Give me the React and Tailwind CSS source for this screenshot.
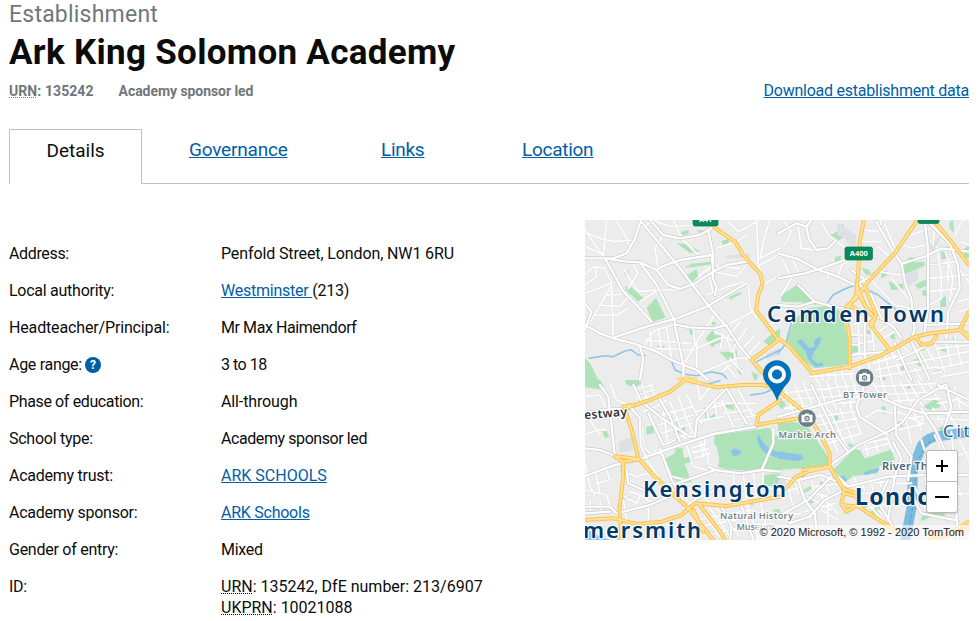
import React from "react";

const link = "text-[#005ea5] underline decoration-1 underline-offset-[1px] [text-decoration-skip-ink:none]";

const tiles = {
  nw: "translate(580 215) scale(0.33333)",
  ne: "translate(778 215) scale(0.33333)",
  sw: "translate(580 380) scale(0.33333)",
  se: "translate(778 380) scale(0.33333)",
};

/* Each map layer is split in four quadrants, drawn at three units to a pixel. */
const parks = {
  nw: "M200 278L228 248L257 308L218 320Z M290 85L320 88L360 108L330 114Z M303 50L325 45L326 56L306 60Z M424 78L445 72L448 88L430 94Z M310 158L335 146L392 140L394 148L345 155Z M322 180L350 162L354 182L336 202L322 194Z M446 246L482 230L482 238L450 254Z M135 215L150 212L170 232L190 248L180 264L162 248L140 228Z M133 170L145 167L145 180L134 180Z M15 430L32 448L55 495L15 495Z M327 342L345 345L347 366L330 357Z M395 320L410 322L400 335Z M376 372L398 345L405 360L424 362L428 380L405 388L398 398Z M418 410L455 410L470 405L474 440L462 430L448 440Z M550 380L565 365L600 340V380L570 392Z M230 392L254 392L252 402L232 400Z M350 45L380 47L384 57L362 56Z M515 470L535 480L530 495L522 495Z M470 460L484 458L490 480L478 476Z",
  ne: "M10 240L60 208L80 238L118 258L115 270L70 262L10 260Z M28 370L50 312L90 280L150 272L190 290L212 385L212 450L110 460L60 430L35 395Z M158 60L185 45L190 28L198 30L194 68L184 76Z M172 125L190 122L185 142L170 140Z M250 158L275 165L278 180L262 178Z M515 20L525 15L528 55L515 40Z M488 110L508 110L512 128L492 134Z M310 175L325 165L328 182L310 190Z M380 150L395 126L415 130L410 142L440 140V152L380 178L370 170Z M332 198L352 208L376 206V222L340 225Z M410 210L445 192L446 212L422 222Z M434 225L446 225L446 244L432 240Z M488 250L504 242L504 275L486 278Z M560 100L573 90V130L558 130Z M268 342L278 348L276 360L267 355Z M315 335L322 335L323 346L314 346Z M335 355L350 355L352 375L337 370Z M220 360L240 360V366H220Z M220 390L242 396L240 410L220 415Z M405 435L435 425L450 435L425 455Z M420 400L432 396L440 405L425 410Z M523 365L535 365L537 378L527 378Z M490 395L505 395L506 410L490 408Z M370 445L382 452L376 468L368 465Z M465 470L485 463L486 470L468 477Z M300 490L320 482L324 495H305Z",
  sw: "M15 0H60L72 20L58 28L15 22Z M135 0L180 0L186 12L162 22L140 14Z M404 165L500 153L570 143L575 160L600 170V270L550 275L440 268L414 260L418 238L410 200L402 188Z M255 236L285 220L287 205L308 205L312 235L330 228L334 245L314 252L335 305L315 310L275 298L262 262Z M198 142L220 136L222 160L200 164Z M65 150L78 147L88 170L75 175Z M262 125L276 128L276 134L262 132Z M280 155L312 138L316 148L290 164Z M286 128L300 125L296 140Z M374 100L385 92L390 110L410 98L414 110L378 120Z M434 75L460 68L462 90L440 84Z M468 93L483 90L483 100L470 100Z M502 370L518 358L520 378Z M552 285L600 280V325L570 318L550 318Z M122 347L136 343L135 352L152 350L150 357L122 355Z M330 0H350L355 8L338 15Z M108 460L122 456L124 480H110Z M580 388L600 388V400L582 400Z",
  se: "M0 130L50 125L90 140L155 238L155 255L80 265L0 270Z M165 270L228 208L246 210L260 236L340 208L350 238L298 262L300 280L225 288L195 312L165 285Z M435 80L480 50L488 80L455 90Z M500 28L515 22L520 40L505 43Z M0 75L15 60L24 76L12 88Z M310 82L320 78L328 100L318 102Z M164 110L180 105L180 128L164 125Z M360 125L374 122L374 140L362 140Z M70 285L80 280L84 300L72 300Z M125 305L142 302L140 318L128 318Z M93 345L105 345L107 370L93 370Z M280 390L305 380L304 405L280 400Z M245 378L268 374L270 385L250 390Z M430 410L470 395L500 400V415L460 410L430 424Z M480 145L500 135L502 155L490 160Z M210 190L228 195L225 203L212 200Z M385 15L410 10L408 25L388 26Z M75 330L98 318L101 328L80 338Z",
};

const estates = {
  nw: "M438 122L508 115V128L438 130Z M560 415L600 400V422L560 430Z",
  ne: "M178 22L235 60L235 90L222 100L200 70L178 60Z M455 90L490 60L475 100L460 110Z M382 180L420 160L420 195L390 215L382 205Z",
  sw: "M115 185L158 170V210L118 218Z",
  se: "M0 300L20 290L25 320L0 330Z",
};

const rivers = {
  nw: "M28 430L75 422L100 425L135 408L152 404L175 420L195 422 M272 432L285 465L315 478L350 482L395 470L428 478L440 490 M530 440L560 425L600 405",
  ne: "M150 262L165 240L200 222L232 210 M270 225L300 240L350 280L356 288 M0 415L25 385L30 360L40 325",
  sw: "M385 12L420 2 M512 45L550 40L572 30",
};

const lakes = {
  ne: "M56 378L70 372L95 400L110 395L108 378L122 366H130L126 384L110 408L100 430L118 446L135 442V454L112 456L90 432L82 408Z",
  sw: "M453 212Q468 200 484 214Q478 228 465 230Q454 224 453 212Z M534 160Q545 190 575 210L600 218V234Q560 228 544 208Q528 184 534 160Z M15 445L60 470L90 480H15Z",
  se: "M0 214L40 220L70 224L78 235L60 243L0 236Z M172 290L198 288L207 300L194 314Z M256 278L305 262L300 275L262 286Z",
};

const roads = {
  nw: "M180 15L225 70L300 160L345 220L400 290L440 335L480 395L515 435L545 475 M183 15L165 70L140 115L100 130L15 130 M75 130L140 140L180 142L230 165L265 210L300 222L345 205L400 170L440 150L500 140 M75 130L95 165L130 230L160 260L215 320 M15 330L60 355L100 370L160 385L190 395L230 410L265 430L310 450L350 465L385 495 M100 368L200 335L290 310L380 275L430 245L500 205 M15 268L35 290L15 345 M283 325L310 450L310 495 M285 328L330 337L400 340L440 330 M182 145L230 210L285 320 M230 165L245 155L300 135L395 120L400 170 M180 395L190 430L180 495 M405 15L385 50L400 120L398 190L410 215L405 240 M210 15L250 60L300 70L360 60L395 40",
  ne: "M0 55L55 25L85 35L100 15 M85 35L92 70L115 105L150 100L175 75 M0 115L60 132L115 162L180 185L230 210L260 195L300 170 M0 190L80 175L130 160L215 130 M0 270L60 275L110 260L165 275L195 280 M110 260L60 210 M235 200L280 240L310 310L350 340L370 370 M295 20L340 100L370 145L382 205L400 250L410 340L400 380L430 440L455 495 M440 20L450 100L450 280L440 350 M450 20L515 85L540 150L545 220L510 290L505 370 M220 165L255 190L280 255L300 310 M440 330L573 325 M375 145L440 125L490 100L573 110 M355 435L390 420L430 400L470 380L573 380 M350 385L375 440L400 495 M260 320L260 430 M220 420L330 410",
  sw: "M60 15L85 50L105 230 M15 100L70 90L140 85L210 60L240 45 M15 205L60 210L105 228 M15 288L105 255L185 235L300 195L400 162L530 140 M150 80L180 115L182 195L200 235 M240 205L275 300L310 360 M205 100L250 195L285 180 M235 50L270 110L300 185 M345 170L350 120L400 65L440 25 M440 25L500 130 M385 260L405 270L480 280L545 270L600 275 M290 310L350 290L405 270 M310 385L350 355L420 325 M140 270L145 310L190 330 M15 380L90 380L110 400L210 375L290 340 M15 400L90 395 M545 270L580 190L580 145 M210 425L240 480 M425 380L455 440L450 480 M480 365L520 480 M160 15L185 65L240 110L330 170L345 170",
  se: "M155 258L240 195L340 150L375 125L420 60L500 15 M165 275L210 320L330 290L450 285L573 285 M0 290L60 300L130 285L200 315 M60 300L80 360L110 400L120 480 M100 15L140 95L170 160L210 215 M0 110L180 60L280 40L370 80L440 100L573 95 M350 80L355 165L400 230L390 300 M345 185L370 235L350 290L330 420 M430 85L470 145L500 210 M265 0L235 80L245 110L330 165 M505 15L520 80L500 140 M200 330L140 360L95 410L35 430 M160 290L90 360L0 410 M330 300L300 365L350 450 M395 330L430 400L530 420 M535 400L540 480 M480 15L573 60",
};

const lanes = {
  nw: "M20 55L60 70L100 80L165 75 M20 95L70 120L80 15 M15 45L50 95L75 130 M110 20L135 60L150 95 M15 180L40 155L75 160L95 205L15 235 M45 155L50 185L15 210 M95 210L55 280L25 330 M60 270L120 275L145 245 M80 240L125 238 M45 300L110 300L145 280 M95 215L100 365 M130 160L175 230L235 225 M160 150L175 175L145 220 M180 260L235 225L300 225 M175 40L230 15 M230 20L275 35L345 30 M235 165L225 100L250 60 M280 15L305 70L355 120 M345 220L360 180L400 150 M385 170L400 235L440 260 M380 240L440 215L505 200 M400 170L470 185L495 155 M410 155L480 160 M410 100L470 80L500 60 M445 20L475 50L530 20 M530 15L535 150L550 190 M570 15L555 60L540 130L600 100 M540 150L580 130L600 110 M550 210L600 180 M505 205L510 280L530 310 M440 330L500 300L525 285 M410 290L350 380L350 460 M340 340L345 390L310 450 M190 395L225 345L280 330 M210 350L215 410 M235 345L245 415 M260 340L275 430 M195 375L330 385 M215 400L345 405 M350 400L430 365L480 385 M370 470L470 430L515 430 M430 440L470 490 M450 430L490 475 M425 470L450 450 M405 350L430 360L420 400 M440 370L455 410 M460 400L470 450 M480 320L440 370 M500 340L460 400 M520 365L480 410 M540 380L500 425 M560 330L590 320",
  ne: "M20 20L40 50L20 90 M60 30L70 100L115 105 M130 20L155 65L205 100 M180 190L190 150L225 130 M150 190L145 160 M15 135L40 190L10 240 M45 135L65 180 M245 80L310 80 M250 45L300 50L310 15 M320 25L350 100 M300 170L370 180 M280 195L350 270L400 280 M340 190L390 250 M300 95L330 120 M400 60L455 40 M360 85L400 100L440 90 M470 20L465 90 M530 60L555 15 M475 95L490 180L490 250L440 280 M500 100L525 190L515 260 M450 150L540 140 M450 190L573 180 M450 230L540 220 M510 150L510 200 M540 160L573 200 M550 80L573 90 M540 260L573 250 M545 290L573 280 M220 330L260 320 M215 360L270 360 M220 390L280 380 M240 320L245 430 M280 320L290 430 M300 350L350 320 M315 370L350 350 M295 340L360 440 M300 430L310 495 M320 420L340 490 M340 410L370 480 M360 400L390 470 M285 445L400 410 M290 465L470 430 M300 485L480 455 M375 395L400 420 M420 400L450 455 M440 390L470 440 M470 380L500 470 M500 360L520 450 M530 360L550 450 M480 400L573 390 M470 430L573 410 M480 460L573 440 M490 485L573 470 M410 460L430 495 M440 480L490 470 M110 475L115 495 M130 470L135 495 M150 466L155 495 M170 462L175 495 M190 460L195 495 M215 450L220 495 M240 445L245 480 M95 485L230 475 M270 440L275 465",
  sw: "M90 10L110 60L145 75 M160 30L220 15 M165 45L225 30 M175 58L230 45 M160 15L175 60 M185 12L200 55 M210 10L225 48 M15 50L60 45L75 80 M190 95L225 80L260 60 M225 110L340 80 M235 135L340 105 M245 160L335 130 M255 185L345 155 M250 95L265 200 M270 65L315 175 M295 50L340 165 M320 45L365 130 M345 95L430 75 M350 125L430 110 M380 75L385 120 M405 65L410 110 M425 60L460 140 M450 45L500 130 M475 30L520 110 M405 70L530 70 M430 100L520 90 M460 120L530 105 M350 5L360 60 M390 20L360 60 M430 20L400 80 M15 165L50 150L80 150 M30 120L60 165 M185 130L190 200L215 225 M320 195L340 260L380 270 M335 205L380 190 M338 218L385 205 M345 235L390 220 M360 180L370 230 M375 175L372 205L385 225L385 250L405 268 M15 250L30 320L45 345 M45 270L60 340 M75 255L90 300L50 310 M15 330L80 345L90 380 M125 270L170 290L200 280 M130 300L160 305 M180 240L240 205 M200 240L235 290 M245 220L275 290L320 300 M270 310L350 330 M30 365L30 405 M60 365L65 405 M125 345L170 370L180 345L210 365 M150 335L185 345 M205 380L205 425 M310 350L340 380 M300 365L340 395 M370 350L400 380 M370 400L420 470 M390 385L450 470 M410 385L480 470 M350 420L450 400L520 390 M360 440L520 410 M380 465L540 430 M500 370L530 460 M540 360L560 450 M460 280L465 370 M490 280L500 370 M520 275L530 360 M550 280L545 360 M545 320L600 330 M130 360L140 425",
  se: "M20 20L50 110 M50 10L85 100 M75 5L110 95 M120 0L150 95 M145 0L175 90 M170 0L200 80 M200 0L220 80 M225 0L240 60 M0 40L250 15 M0 60L230 45 M20 85L240 65 M110 110L230 95 M120 135L235 115 M135 165L240 135 M150 190L250 160 M125 100L180 215 M155 90L205 200 M185 85L225 185 M215 75L250 160 M250 120L300 90L345 100 M260 190L330 175 M255 210L335 190 M260 190L270 225 M290 180L300 215 M325 170L345 215 M280 0L310 50 M310 0L330 65 M340 0L370 75 M365 0L400 75 M390 0L440 90 M420 0L450 50 M450 0L480 60 M290 20L480 10 M300 45L480 35 M320 65L490 55 M360 95L430 130 M360 120L430 110 M360 150L440 130 M380 100L400 190 M405 90L430 150 M440 95L430 130 M465 85L500 140 M490 65L540 145 M530 20L550 100 M480 70L573 50 M450 115L573 120 M540 60L573 80 M10 340L70 320 M30 320L45 380 M50 300L60 340 M100 300L110 340L150 350 M130 290L155 340 M110 320L190 310 M90 350L160 390 M130 350L180 400 M80 395L170 370 M130 390L180 420 M150 370L150 430 M230 295L245 330 M250 300L260 330 M275 295L285 330 M300 290L310 320 M220 310L340 305 M230 345L330 330 M250 390L330 370 M350 310L400 310 M360 350L395 340 M300 390L340 430 M270 370L330 440 M410 320L450 400 M440 290L460 400 M470 290L480 395 M500 290L540 395 M530 285L550 350 M440 385L550 380 M430 345L573 340 M430 180L440 210 M470 165L490 210 M520 155L525 210 M545 180L573 240 M530 230L573 215 M0 410L70 400",
};

const arteries = {
  nw: "M395 30L420 50L465 80L490 120L520 155L540 175L548 205L535 240L528 285L595 375L515 435L560 485",
  ne: "M258 15L245 80L242 150L235 240L210 280L205 310L215 370L215 460 M415 20L350 115L270 200L235 250L205 275 M470 20L520 80L573 150 M235 210L260 270L290 310L275 325L335 405 M260 215L295 300L280 335 M240 235L280 300 M210 270L250 290 M0 370L35 395L100 470 M100 475L215 455L300 425L350 400L410 365L460 355L545 345L573 360 M545 345L573 290 M545 345L573 370 M415 370L430 390L460 385L475 365",
  sw: "M600 25L545 15L485 15L410 22L340 5L315 0L270 35L215 58L150 80L135 90L155 150L175 235L220 285L275 340L325 385L360 430L400 480 M130 80L150 75 M105 230L128 245L130 290L118 390L125 480 M105 228L178 238L128 245 M15 420L100 415L170 432L245 425L305 405L345 370L440 378L600 350 M600 60L535 105L530 135L600 122 M355 370L420 455L435 480 M340 390L370 455",
  se: "M0 30L35 60L90 105L130 170L155 220L155 260L90 275L55 290L20 330 M0 125L90 110 M150 260L75 270 M155 260L195 325L235 340L240 375L205 395L190 370L200 325 M235 375L280 405L350 450 M195 340L245 350 M190 375L245 380 M505 465L573 425 M455 480L573 445",
};

function Layer({ data, ...props }) {
  return (
    <g {...props}>
      {Object.entries(data).map(([k, d]) => (
        <path key={k} d={d} transform={tiles[k]} />
      ))}
    </g>
  );
}

function Camera({ x, y }) {
  return (
    <g transform={`translate(${x} ${y})`}>
      <circle r="9.3" fill="#6b7f88" stroke="#fff" strokeWidth="0.8" />
      <path d="M-5.500-3.500H-2.600L-1.600-4.800H1.600L2.600-3.500H5.500V4H-5.500Z" fill="#fff" />
      <circle cy="0.3" r="2.7" fill="#6b7f88" />
      <circle cy="0.3" r="1.5" fill="#fff" />
      <circle cy="0.3" r="0.7" fill="#6b7f88" />
    </g>
  );
}

function Shield({ x, y, width, label, labelWidth }) {
  return (
    <g>
      <rect x={x} y={y} width={width} height="13" rx="2" fill="#078b59" stroke="#057a4d" strokeWidth="0.7" />
      {label && (
        <text x={x + width / 2} y={y + 9.3} textAnchor="middle" fill="#fff" fontSize="7.5" fontWeight="700" textLength={labelWidth} lengthAdjust="spacingAndGlyphs">
          {label}
        </text>
      )}
    </g>
  );
}

function MapView() {
  return (
    <div className="relative h-[320px] w-[384px] shrink-0 overflow-hidden bg-[#ececec]">
      <svg viewBox="585 220 384 320" className="block h-[320px] w-[384px] font-['Noto_Sans',sans-serif]">
        <g strokeLinejoin="round" strokeLinecap="round">
          <Layer data={parks} fill="#aee3b8" />
          <Layer data={estates} fill="#dde0e5" />
          <Layer data={lakes} fill="#8cc4e8" />
          <Layer data={rivers} fill="none" stroke="#8cc4e8" strokeWidth="4.5" />
          <path d="M905 542L912 505L913 468L922 445Q930 436 940 436L969 432" fill="none" stroke="#7dbce0" strokeWidth="10" />
          <path d="M908 535L914 498L916 465L926 444L936 439" fill="none" stroke="#5f9fc8" strokeWidth="1" strokeDasharray="3 3" />
          <Layer data={lanes} fill="none" stroke="#dedede" strokeWidth="7.5" />
          <Layer data={lanes} fill="none" stroke="#fff" strokeWidth="5" />
          <Layer data={roads} fill="none" stroke="#c6c6c6" strokeWidth="10.5" />
          <Layer data={roads} fill="none" stroke="#fff" strokeWidth="7.2" />
          <Layer data={arteries} fill="none" stroke="#fbc440" strokeWidth="12" />
          <Layer data={arteries} fill="none" stroke="#ffe0a0" strokeWidth="6" />
          <ellipse cx="687" cy="379" rx="11" ry="2.5" fill="#ffd98a" />
        </g>

        <Shield x={693} y={213} width={25} label="A41" labelWidth={13} />
        <Shield x={845} y={247} width={27.5} label="A400" labelWidth={18} />
        <Shield x={918} y={210.500} width={21} />

        <g fill="#00396a" stroke="#fff" strokeWidth="2.5" strokeOpacity="0.85" strokeLinejoin="round" paintOrder="stroke">
          <text x="767" y="322" fontSize="22" fontWeight="600" textLength="177">Camden Town</text>
          <text x="643" y="497" fontSize="22" fontWeight="600" textLength="143">Kensington</text>
          <text x="583" y="538" fontSize="22" fontWeight="600" textLength="118">mersmith</text>
          <text x="855" y="505" fontSize="23" fontWeight="700" textLength="93">London</text>
          <text x="943" y="437" fontSize="17" textLength="38" fill="#2d5f86">City</text>
          <text x="882" y="470" fontSize="11" fontWeight="600" textLength="76" fill="#3d6783">River Thames</text>
          <text x="584" y="417.500" fontSize="12" fontWeight="600" textLength="43" fill="#303438" transform="rotate(-5 605 414)">estway</text>
          <g fill="#75868d" fontSize="9.3" fontWeight="600">
            <text x="843" y="397.500" textLength="44">BT Tower</text>
            <text x="778.500" y="438" textLength="57.500">Marble Arch</text>
            <text x="720" y="519" textLength="73">Natural History</text>
            <text x="736.500" y="529.500" textLength="38">Museum</text>
          </g>
        </g>
        <Camera x={864.6} y={377.5} />
        <Camera x={807} y={418.2} />
        <path d="M777 401Q774.500 393 768 385A14 14 0 1 1 786 385Q779.500 393 777 401Z" fill="#0072bb" />
        <circle cx="777" cy="374.500" r="7" fill="none" stroke="#fff" strokeWidth="4" />
      </svg>
      <div className="absolute right-0 bottom-0 bg-white/60 pr-[5px] pl-1 font-['Liberation_Sans',Arial,sans-serif] text-[11px] leading-[15px] tracking-[0.02px] whitespace-nowrap text-[#222]">
        © 2020 Microsoft, © 1992 - 2020 TomTom
      </div>
      <div className="absolute right-[11px] bottom-[27px] flex h-[63px] w-[32px] flex-col rounded-[3px] border border-[#b8b8b8] bg-white shadow-sm">
        <button aria-label="Zoom in" className="flex flex-1 items-center justify-center border-b border-[#b8b8b8]">
          <svg viewBox="0 0 12 12" className="size-3"><path d="M0 6H12M6 0V12" stroke="#000" strokeWidth="2" /></svg>
        </button>
        <button aria-label="Zoom out" className="flex flex-1 items-center justify-center">
          <svg viewBox="0 0 14 12" className="h-3 w-3.5"><path d="M0 6H14" stroke="#000" strokeWidth="2" /></svg>
        </button>
      </div>
    </div>
  );
}

function Abbr({ children }) {
  return (
    <abbr className="underline decoration-dotted decoration-1 underline-offset-[1px] [text-decoration-skip-ink:none]">
      {children}
    </abbr>
  );
}

function Row({ label, labelClass = "tracking-[-0.26px]", valueClass = "", children }) {
  return (
    <div className="flex py-2">
      <dt className={`flex w-[212px] shrink-0 items-start ${labelClass}`}>{label}</dt>
      <dd className={`whitespace-nowrap ${valueClass}`}>{children}</dd>
    </div>
  );
}

function Help() {
  return (
    <span className="mt-[3px] ml-[3px] flex size-4 items-center justify-center rounded-full bg-[#005ea5] text-[12px] leading-none font-bold tracking-normal text-white">?</span>
  );
}

export default function App() {
  return (
    <main className="h-[621px] w-[978px] overflow-hidden bg-white pl-[9px] font-['Roboto',sans-serif] text-[#0b0c0c]">
      <div className="w-[960px]">
        <p className="h-[30px] text-[23px] leading-[29px] tracking-[0.22px] text-[#6f777b]">Establishment</p>
        <h1 className="h-[48px] text-[35px] leading-[46px] font-bold tracking-[0.3px]">Ark King Solomon Academy</h1>
        <div className="flex h-[51px] items-start justify-between">
          <div className="flex gap-[25px] pt-1 text-[14px] leading-[18px] font-bold text-[#6f777b]">
            <span className="tracking-[0.08px]"><Abbr>URN</Abbr>: 135242</span>
            <span className="tracking-[-0.06px]">Academy sponsor led</span>
          </div>
          <a className={`${link} pt-0.5 text-[16px] leading-[21px] tracking-[-0.24px]`}>Download establishment data</a>
        </div>
        <nav className="flex h-[55px] text-[19px] leading-[24px]">
          <div className="w-[133px] border border-b-0 border-[#bfc1c3] pt-[9px] text-center">Details</div>
          <div className="flex flex-1 border-b border-[#bfc1c3] pt-[9px] tracking-[-0.28px]">
            <a className={`${link} ml-[47px] w-[192px] tracking-[-0.2px]`}>Governance</a>
            <a className={`${link} w-[141px]`}>Links</a>
            <a className={link}>Location</a>
          </div>
        </nav>
        <div className="flex justify-between pt-9">
          <dl className="pt-[15px] text-[16px] leading-[21px]">
            <Row label="Address:" labelClass="tracking-[-0.35px]" valueClass="tracking-[-0.12px]">Penfold Street, London, NW1 6RU</Row>
            <Row label="Local authority:" valueClass="tracking-[-0.24px]"><a className={link}>Westminster </a>(213)</Row>
            <Row label="Headteacher/Principal:" labelClass="tracking-[-0.15px]" valueClass="tracking-[-0.42px]">Mr Max Haimendorf</Row>
            <Row label={<>Age range:<Help /></>} labelClass="tracking-[-0.3px]" valueClass="tracking-[-0.5px]">3 to 18</Row>
            <Row label="Phase of education:" labelClass="tracking-[-0.37px]" valueClass="tracking-[-0.12px]">All-through</Row>
            <Row label="School type:" valueClass="tracking-[-0.42px]">Academy sponsor led</Row>
            <Row label="Academy trust:"><a className={link}>ARK SCHOOLS</a></Row>
            <Row label="Academy sponsor:" valueClass="tracking-[-0.25px]"><a className={link}>ARK Schools</a></Row>
            <Row label="Gender of entry:" valueClass="tracking-[-0.3px]">Mixed</Row>
            <Row label="ID:"><Abbr>URN</Abbr>: 135242, DfE number: 213/6907<br /><Abbr>UKPRN</Abbr>: 10021088</Row>
          </dl>
          <MapView />
        </div>
      </div>
    </main>
  );
}
